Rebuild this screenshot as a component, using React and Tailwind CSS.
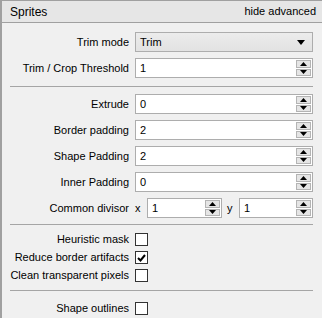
const FONT = { fontFamily: '"Liberation Sans", Arial, sans-serif' }

function Arrows() {
  return (
    <div className="flex flex-col w-[15px] h-full py-px mr-px gap-px">
      <div className="flex-1 flex items-center justify-center bg-[#e5e5e5] border border-[#b4b4b4]">
        <svg width="7" height="4" viewBox="0 0 7 4"><path d="M3.5 0L7 4H0z" fill="#000" /></svg>
      </div>
      <div className="flex-1 flex items-center justify-center bg-[#e5e5e5] border border-[#b4b4b4]">
        <svg width="7" height="4" viewBox="0 0 7 4"><path d="M0 0H7L3.5 4z" fill="#000" /></svg>
      </div>
    </div>
  )
}

function SpinBox({ value, className = '' }) {
  return (
    <div className={`flex items-stretch h-[20px] bg-white border border-[#adadad] ${className}`}>
      <div className="flex-1 flex items-center pl-[4px] text-[11px] text-black">{value}</div>
      <Arrows />
    </div>
  )
}

function Combo({ value }) {
  return (
    <div className="flex items-center h-[20px] border border-[#adadad] bg-gradient-to-b from-[#ececec] to-[#e2e2e2] pl-[4px] pr-[7px]">
      <span className="flex-1 text-[11px] text-black">{value}</span>
      <svg width="8" height="5" viewBox="0 0 8 5"><path d="M0 0H8L4 5z" fill="#000" /></svg>
    </div>
  )
}

function Check({ checked }) {
  return (
    <div className="w-[13px] h-[13px] border border-[#333] bg-white flex items-center justify-center">
      {checked && (
        <svg width="9" height="8" viewBox="0 0 9 8">
          <path d="M1 4L3.5 6.5L8 1" stroke="#000" strokeWidth="2" fill="none" />
        </svg>
      )}
    </div>
  )
}

function Row({ label, children, h = 'h-[20px]' }) {
  return (
    <div className={`flex items-center ${h}`}>
      <div className="w-[119px] text-right text-[11px] text-black whitespace-nowrap pr-0">{label}</div>
      <div className="ml-[6px] flex-1">{children}</div>
    </div>
  )
}

export default function App() {
  return (
    <div className="w-[322px] h-[318px] bg-[#f0f0f0] border-l-2 border-[#a0a0a0] overflow-hidden" style={FONT}>
      <div className="h-[23px] flex items-center justify-between pl-[8px] pr-[6px] bg-[#e6e6e6] border-t border-b border-[#a0a0a0] text-[12px] text-black">
        <span>Sprites</span>
        <span className="text-[11px]">hide advanced</span>
      </div>
      <div className="pl-[8px] pr-[9px] pt-[9px]">
        <div className="flex flex-col gap-[6px]">
          <Row label="Trim mode"><Combo value="Trim" /></Row>
          <Row label="Trim / Crop Threshold"><SpinBox value="1" /></Row>
        </div>
        <div className="border-t border-[#a5a5a5] mt-[8px] mb-[7px]" />
        <div className="flex flex-col gap-[6px]">
          <Row label="Extrude"><SpinBox value="0" /></Row>
          <Row label="Border padding"><SpinBox value="2" /></Row>
          <Row label="Shape Padding"><SpinBox value="2" /></Row>
          <Row label="Inner Padding"><SpinBox value="0" /></Row>
          <Row label="Common divisor">
            <div className="flex items-center">
              <span className="w-[12px] text-[11px] text-black">x</span>
              <SpinBox value="1" className="w-[75px]" />
              <span className="w-[17px] pl-[5px] text-[11px] text-black">y</span>
              <SpinBox value="1" className="flex-1" />
            </div>
          </Row>
        </div>
        <div className="border-t border-[#a5a5a5] mt-[6px] mb-[8px]" />
        <div className="flex flex-col gap-[5px]">
          <Row label="Heuristic mask" h="h-[13px]"><Check /></Row>
          <Row label="Reduce border artifacts" h="h-[13px]"><Check checked /></Row>
          <Row label="Clean transparent pixels" h="h-[13px]"><Check /></Row>
        </div>
        <div className="border-t border-[#a5a5a5] mt-[8px] mb-[11px]" />
        <Row label="Shape outlines" h="h-[13px]"><Check /></Row>
      </div>
    </div>
  )
}
